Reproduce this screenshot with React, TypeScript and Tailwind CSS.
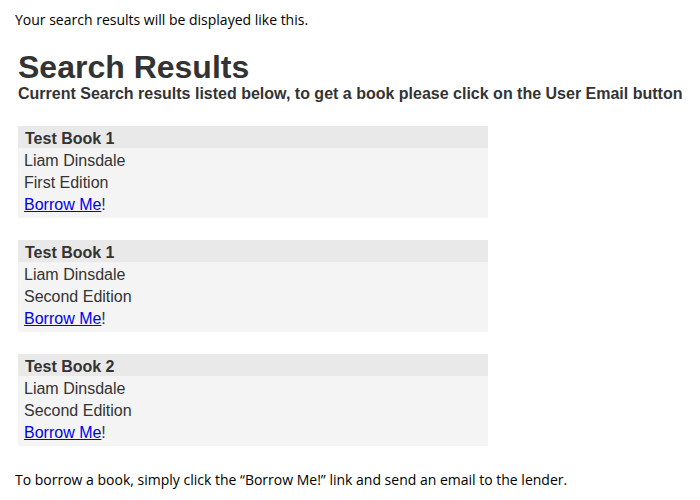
const books = [
  { title: 'Test Book 1', author: 'Liam Dinsdale', edition: 'First Edition' },
  { title: 'Test Book 1', author: 'Liam Dinsdale', edition: 'Second Edition' },
  { title: 'Test Book 2', author: 'Liam Dinsdale', edition: 'Second Edition' },
];

const BookCard = ({ book }: { book: { title: string; author: string; edition: string } }) => {
  return (
    <div className="w-[470px] bg-[#f4f4f4] text-[16px] leading-[22px] text-[#333]">
      <div className="h-[22px] bg-[#e9e9e9] px-[7px] pt-[4px] leading-[18px] font-bold">{book.title}</div>
      <div className="px-[6px] pt-[2px] pb-[2px]">
        <p>{book.author}</p>
        <p>{book.edition}</p>
        <p>
          <a href="#" className="text-[#0000ee] underline">Borrow Me</a>!
        </p>
      </div>
    </div>
  );
};

export default function App() {
  return (
    <div className="w-[700px] h-[500px] bg-white">
      <p className="pl-[15px] pt-[10px] text-[14px] leading-[20px] text-black [font-family:'Open_Sans',sans-serif]">
        Your search results will be displayed like this.
      </p>
      <div className="pl-[18px] pt-[20px] [font-family:'Liberation_Sans',Arial,sans-serif]">
        <h1 className="text-[32px] leading-[34px] font-bold text-[#333]">Search Results</h1>
        <h2 className="text-[16px] leading-[20px] font-bold text-[#333]">
          Current Search results listed below, to get a book please click on the User Email button
        </h2>
        <div className="mt-[22px] flex flex-col gap-[22px]">
          {books.map((b, i) => (
            <BookCard key={i} book={b} />
          ))}
        </div>
      </div>
      <p className="pl-[15px] pt-[24px] text-[14px] leading-[20px] text-black [font-family:'Open_Sans',sans-serif]">
        To borrow a book, simply click the “Borrow Me!” link and send an email to the lender.
      </p>
    </div>
  );
}
